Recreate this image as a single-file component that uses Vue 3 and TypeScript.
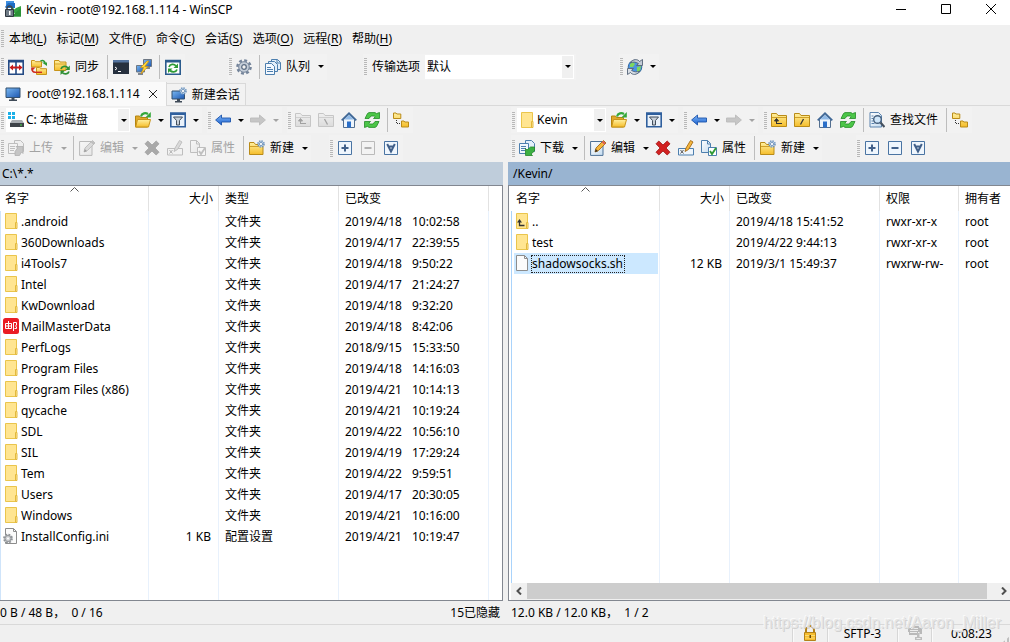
<script setup lang="ts">
import { ref } from 'vue'

interface Item {
  icon?: string
  label?: string
  title?: string
  arrow?: boolean
  disabled?: boolean
  sep?: boolean
  combo?: string
  comboLabel?: string
}
interface Group {
  items: Item[]
  kind?: string
}
interface LocalFile {
  icon: string
  name: string
  size: string
  type: string
  date: string
  time: string
}
interface RemoteFile {
  icon: string
  name: string
  size: string
  date: string
  rights: string
  owner: string
}

const sep: Item = { sep: true }

const menus: [string, string][] = [
  ['本地', 'L'], ['标记', 'M'], ['文件', 'F'], ['命令', 'C'],
  ['会话', 'S'], ['选项', 'O'], ['远程', 'R'], ['帮助', 'H'],
]

const mainBar: Group[] = [
  {
    items: [
      { icon: 'compare', title: '比较目录' },
      { icon: 'syncdirs', title: '同步目录' },
      { icon: 'sync', label: '同步' },
      sep,
      { icon: 'terminal', title: '终端' },
      { icon: 'putty', title: 'PuTTY' },
      sep,
      { icon: 'keepup', title: '刷新' },
    ],
  },
  { kind: 'prefs', items: [{ icon: 'gear', title: '选项' }, sep, { icon: 'queue', label: '队列', arrow: true }] },
  { kind: 'transfer', items: [{ combo: '默认', comboLabel: '传输选项' }] },
  { kind: 'globe', items: [{ icon: 'globe', title: '同步浏览', arrow: true }] },
]

const navItems = (remote: boolean): Group[] => [
  {
    items: [
      remote
        ? { combo: 'Kevin', icon: 'folder', title: '远程目录' }
        : { combo: 'C: 本地磁盘', icon: 'drive', title: '本地驱动器' },
      { icon: 'open', title: '打开目录', arrow: true },
      { icon: 'filter', title: '过滤', arrow: true },
    ],
  },
  {
    items: [
      { icon: 'back', title: '后退', arrow: true },
      { icon: 'forward', title: '前进', arrow: true, disabled: true },
    ],
  },
  {
    items: [
      { icon: 'parent', title: '上级目录', disabled: !remote },
      { icon: remote ? 'root' : 'rootlocal', title: '根目录', disabled: !remote },
      { icon: 'home', title: '主目录' },
      { icon: 'refresh', title: '刷新' },
      ...(remote ? [sep, { icon: 'find', label: '查找文件' }] : []),
      sep,
      { icon: 'tree', title: '目录树' },
    ],
  },
]

const fileItems = (remote: boolean): Group[] => [
  {
    items: [
      { icon: remote ? 'download' : 'upload', label: remote ? '下载' : '上传', arrow: true, disabled: !remote },
      sep,
      { icon: 'edit', label: '编辑', arrow: true, disabled: !remote },
      { icon: 'delete', title: '删除', disabled: !remote },
      { icon: 'rename', title: '重命名', disabled: !remote },
      { icon: 'props', label: '属性', disabled: !remote },
      sep,
      { icon: 'newdir', label: '新建', arrow: true },
    ],
  },
  {
    kind: remote ? 'marks-remote' : 'marks-local',
    items: [
      { icon: 'plus', title: '选择' },
      { icon: 'minus', title: '取消选择', disabled: !remote },
      { icon: 'select', title: '全选' },
    ],
  },
]

const dir = (name: string, date: string, time: string, icon = 'folder'): LocalFile => ({
  icon, name, size: '', type: '文件夹', date, time,
})
const localFiles: LocalFile[] = [
  dir('.android', '2019/4/18', '10:02:58'),
  dir('360Downloads', '2019/4/17', '22:39:55'),
  dir('i4Tools7', '2019/4/18', '9:50:22'),
  dir('Intel', '2019/4/17', '21:24:27'),
  dir('KwDownload', '2019/4/18', '9:32:20'),
  dir('MailMasterData', '2019/4/18', '8:42:06', 'mail'),
  dir('PerfLogs', '2018/9/15', '15:33:50'),
  dir('Program Files', '2019/4/18', '14:16:03'),
  dir('Program Files (x86)', '2019/4/21', '10:14:13'),
  dir('qycache', '2019/4/21', '10:19:24'),
  dir('SDL', '2019/4/22', '10:56:10'),
  dir('SIL', '2019/4/19', '17:29:24'),
  dir('Tem', '2019/4/22', '9:59:51'),
  dir('Users', '2019/4/17', '20:30:05'),
  dir('Windows', '2019/4/21', '10:16:00'),
  { icon: 'ini', name: 'InstallConfig.ini', size: '1 KB', type: '配置设置', date: '2019/4/21', time: '10:19:47' },
]
const remoteFiles: RemoteFile[] = [
  { icon: 'folderup', name: '..', size: '', date: '2019/4/18 15:41:52', rights: 'rwxr-xr-x', owner: 'root' },
  { icon: 'folder', name: 'test', size: '', date: '2019/4/22 9:44:13', rights: 'rwxr-xr-x', owner: 'root' },
  { icon: 'file', name: 'shadowsocks.sh', size: '12 KB', date: '2019/3/1 15:49:37', rights: 'rwxrw-rw-', owner: 'root' },
]
const selected = ref('shadowsocks.sh')

const panes = [
  { key: 'local', rows: [navItems(false), fileItems(false)] },
  { key: 'remote', rows: [navItems(true), fileItems(true)] },
]
</script>

<template>
  <div class="window">
    <svg class="defs" width="0" height="0" aria-hidden="true">
      <defs>
        <linearGradient id="gFold" x1="0" y1="0" x2="0" y2="1"><stop offset="0" stop-color="#fff0a0" /><stop offset="1" stop-color="#f5bd2a" /></linearGradient>
        <linearGradient id="gBlue" x1="0" y1="0" x2="1" y2="1"><stop offset="0" stop-color="#7ab8f2" /><stop offset="1" stop-color="#1b56b0" /></linearGradient>
        <linearGradient id="gArrow" x1="0" y1="0" x2="0" y2="1"><stop offset="0" stop-color="#7db4f5" /><stop offset="1" stop-color="#1c62cf" /></linearGradient>
        <linearGradient id="gPale" x1="0" y1="0" x2="1" y2="1"><stop offset="0" stop-color="#fff" /><stop offset="1" stop-color="#c5dcf0" /></linearGradient>
      </defs>
      <symbol id="i-app" viewBox="0 0 16 16">
        <path d="M1 0h8v6H1z" fill="#3f8fe0" /><path d="M0 6l3-4h7v5H1z" fill="#1e6cc4" />
        <path d="M6.500 5l3 3.500L11 7l5-2v10.500H6.500l3.500-3-3.500-3z" fill="#37a343" /><path d="M10 12l6-5v8.500H8z" fill="#2a9136" />
        <path d="M2 9V7.500a2.500 2.500 0 0 1 5 0V9" fill="none" stroke="#3e4750" stroke-width="1.600" />
        <path d="M.5 8.500h8v7h-8z" fill="#6f7b86" stroke="#2f3740" /><path d="M4 10h1.500v4H4z" fill="#fff" />
      </symbol>
      <symbol id="i-compare" viewBox="0 0 16 16">
        <path d="M.8 1.500h14.400v13.700H.8z" fill="#fff" stroke="#244a84" stroke-width="1.600" />
        <path d="M0 1h16v2.500H0zM7.200 1h1.600v14H7.200z" fill="#244a84" />
        <path d="M1.500 8.500L5 5.500v2h6v-2l3.500 3-3.500 3v-2H5v2z" fill="#c81a1a" />
      </symbol>
      <symbol id="i-syncdirs" viewBox="0 0 16 16">
        <path d="M.5 1.500h3l1 1.200h6v5.300h-10z" fill="url(#gFold)" stroke="#c8941a" />
        <path d="M5.500 8.500h3l1 1.200h6v5.800h-10z" fill="url(#gFold)" stroke="#c8941a" />
        <path d="M9.500 2c2-1 4-.5 4.500 2" fill="none" stroke="#2e9a35" stroke-width="1.600" /><path d="M11 3.500h5v3.500z" fill="#2e9a35" />
        <path d="M1 9.500c0 2 .5 3.500 3 3.800" fill="none" stroke="#cf2b20" stroke-width="1.600" /><path d="M0 8.500h4.500l-3.500 3.500z" fill="#cf2b20" />
        <path d="M4 13.300h7" stroke="#cf2b20" stroke-width="1.400" />
      </symbol>
      <symbol id="i-sync" viewBox="0 0 16 16">
        <path d="M.5 1.500h4.500l1 1.500h6v8.500H.5z" fill="url(#gFold)" stroke="#c8941a" /><path d="M1 5h11" stroke="#d7a52c" />
        <path d="M7 10c1-3 5-3.500 7-1" fill="none" stroke="#2e8f35" stroke-width="1.800" /><path d="M15.800 6.500v4.500h-4.500z" fill="#2e8f35" />
        <path d="M15 12.500c-1 3-5 3-6.800 1" fill="none" stroke="#2e8f35" stroke-width="1.800" /><path d="M6.500 16v-4.500H11z" fill="#2e8f35" />
      </symbol>
      <symbol id="i-terminal" viewBox="0 0 16 16">
        <path d="M0 1h16v14H0z" fill="#26303e" /><path d="M0 1h16v2.500H0z" fill="#54749f" />
        <path d="M2 8l2 1.500-2 1.500M5 12.500h3" fill="none" stroke="#fff" />
      </symbol>
      <symbol id="i-putty" viewBox="0 0 16 16">
        <path d="M7.500.5h8v7h-8z" fill="url(#gBlue)" stroke="#6d7783" /><path d="M.5 6.500h8v6.500h-8z" fill="url(#gBlue)" stroke="#6d7783" />
        <path d="M2 15h5M10 9h4" stroke="#59636f" stroke-width="1.500" />
        <path d="M11 2L4.500 8.500h3L5 15l7-7.500H8.800L13 2z" fill="#ffd83b" stroke="#c98d12" stroke-width=".7" />
      </symbol>
      <symbol id="i-keepup" viewBox="0 0 16 16">
        <path d="M.8 1.500h14.400v13.700H.8z" fill="#fff" stroke="#2b5b8d" stroke-width="1.600" /><path d="M0 1h16v2.500H0z" fill="#2b5b8d" />
        <path d="M4 8c1-3 5-3.500 7-1" fill="none" stroke="#2e9a35" stroke-width="1.800" /><path d="M13 4.500V9H8.500z" fill="#2e9a35" />
        <path d="M12 10.500c-1 3-5 3-7 1" fill="none" stroke="#2e9a35" stroke-width="1.800" /><path d="M3 14V9.500h4.500z" fill="#2e9a35" />
      </symbol>
      <symbol id="i-gear" viewBox="0 0 16 16">
        <circle cx="8" cy="8" r="6.600" fill="none" stroke="#74849a" stroke-width="2.400" stroke-dasharray="2.900 2.280" />
        <circle cx="8" cy="8" r="5.300" fill="#c3ccd7" stroke="#74849a" /><circle cx="8" cy="8" r="2.300" fill="#f2f2f2" stroke="#5e6f84" stroke-width="1.300" />
      </symbol>
      <symbol id="i-queue" viewBox="0 0 16 16">
        <path d="M6.500.5h6l3 3v7h-9z" fill="#e3effa" stroke="#4d7fae" /><path d="M12 .5v3.500h3.500" fill="none" stroke="#4d7fae" />
        <path d="M3.500 2.500h6l3 3v7h-9z" fill="#e3effa" stroke="#4d7fae" />
        <path d="M.5 4.500h6l3 3v8h-9z" fill="#f4f9ff" stroke="#4d7fae" /><path d="M2 8.500h4M2 10.500h6M2 12.500h6" stroke="#4d7fae" />
      </symbol>
      <symbol id="i-globe" viewBox="0 0 16 16">
        <circle cx="8" cy="8" r="6.800" fill="#4a94e0" stroke="#3568a0" /><path d="M3 5l3-2 2 2-2 3H3zM10 8l4-1-1 5-3 1z" fill="#7fd75f" />
        <path d="M3 4C6-.5 11 0 12.500 2.500L15.500.5v6h-6l2-1.800C9.500 3 6 2.500 3 4z" fill="#c3ccd6" stroke="#536377" stroke-width=".9" />
        <path d="M13 12C10 16.500 5 16 3.500 13.500L.5 15.500v-6h6l-2 1.800C6.500 13 10 13.500 13 12z" fill="#d9dfe6" stroke="#536377" stroke-width=".9" />
      </symbol>
      <symbol id="i-monitor" viewBox="0 0 16 16">
        <path d="M1 2h14v9.500H1z" fill="url(#gBlue)" stroke="#33506f" /><path d="M6.500 12h3v1.500h-3zM4 13.500h8V15H4z" fill="#3f4b58" />
      </symbol>
      <symbol id="i-newsession" viewBox="0 0 16 16">
        <path d="M1 4h12.500v8H1z" fill="url(#gBlue)" stroke="#33506f" /><path d="M6 12h3v2H6zM4 14h7v1.500H4z" fill="#3f4b58" />
        <circle cx="12" cy="4" r="3" fill="#d5e5f5" stroke="#6c93bd" stroke-width="1.600" stroke-dasharray="1.400 .96" /><circle cx="12" cy="4" r="1.600" fill="#fff" stroke="#7d9cbd" />
      </symbol>
      <symbol id="i-drive" viewBox="0 0 16 16">
        <path d="M0 0h3v3H0zM4 0h3v3H4zM0 4h3v3H0zM4 4h3v3H4z" fill="#1bb0e8" />
        <path d="M4 8h10l2 3H2z" fill="#a9adb2" /><path d="M2 11h14v4H2z" fill="#3e4349" /><path d="M12 12.500h2v1h-2z" fill="#48e04c" />
      </symbol>
      <symbol id="i-open" viewBox="0 0 16 16">
        <path d="M.5 4h4l1 1.500h7V15H.5z" fill="#e0a82a" stroke="#b3850f" />
        <path d="M2.500 7.500h13L13.500 15H.7z" fill="url(#gFold)" stroke="#c8941a" />
        <path d="M6 4.500C7 1 10.500.5 13 2" fill="none" stroke="#35a83a" stroke-width="2.200" /><path d="M15.800 0v5.500h-5.500z" fill="#35a83a" />
      </symbol>
      <symbol id="i-filter" viewBox="0 0 16 16">
        <path d="M.8 1.300h14.400v13.400H.8z" fill="#eaf2fb" stroke="#2f5f9d" stroke-width="1.600" /><path d="M0 .5h16V3H0z" fill="#2f5f9d" />
        <path d="M3.500 5h9L9.500 8.500V13h-3V8.500z" fill="#c9d0d8" stroke="#414d5b" />
      </symbol>
      <symbol id="i-back" viewBox="0 0 16 16"><path d="M.6 8L6.500 3v3h9v4h-9v3z" fill="url(#gArrow)" stroke="#1d55ab" stroke-width=".9" /></symbol>
      <symbol id="i-forward" viewBox="0 0 16 16"><path d="M15.400 8L9.500 3v3h-9v4h9v3z" fill="#8a8a8a" stroke="#707070" stroke-width=".9" /></symbol>
      <symbol id="i-parent" viewBox="0 0 16 16">
        <path d="M.5 1.500h5l1.500 2h8.500v11H.5z" fill="url(#gFold)" stroke="#b98b18" /><path d="M1 5.500h14" stroke="#cfa02a" />
        <path d="M5.500 12V8M5 11.500h6M3.500 9l2-2.500 2 2.500z" fill="#333" stroke="#333" />
      </symbol>
      <symbol id="i-root" viewBox="0 0 16 16">
        <path d="M.5 1.500h5l1.500 2h8.500v11H.5z" fill="url(#gFold)" stroke="#b98b18" /><path d="M1 5.500h14" stroke="#cfa02a" /><path d="M6.500 12.500l3-5.500" stroke="#333" stroke-width="1.300" />
      </symbol>
      <symbol id="i-rootlocal" viewBox="0 0 16 16">
        <path d="M.5 1.500h5l1.500 2h8.500v11H.5z" fill="url(#gFold)" stroke="#b98b18" /><path d="M1 5.500h14" stroke="#cfa02a" /><path d="M6.500 7l3 5.500" stroke="#333" stroke-width="1.300" />
      </symbol>
      <symbol id="i-home" viewBox="0 0 16 16">
        <path d="M2.500 7.500L8 2.500l5.500 5V15.500h-11z" fill="#eef5fc" stroke="#536f90" /><path d="M.7 8.300L8 1.200l7.300 7.100" fill="none" stroke="#3f6796" stroke-width="1.700" />
        <path d="M3 7.500l5-4.500 5 4.500z" fill="#8fb9e6" /><path d="M6 9.500h4v6H6z" fill="#2a6fc9" />
      </symbol>
      <symbol id="i-refresh" viewBox="0 0 16 16">
        <path d="M1 6.500L3.500 1.500 5 .6h6l1.500 1L15.500.5v6h-6l1.700-1.700-1-.8H7L5 6.500z" fill="#4cc648" stroke="#238a27" stroke-width=".8" />
        <path d="M15 9.500l-2.500 5-1.500.9H5l-1.500-1-3 1.100v-6h6l-1.700 1.700 1 .8H9l2-2.500z" fill="#4cc648" stroke="#238a27" stroke-width=".8" />
      </symbol>
      <symbol id="i-tree" viewBox="0 0 16 16">
        <path d="M.5 1h2.500l.8 1h4v4.500H.5zM8.500 9H11l.8 1h3.700v5h-7z" fill="url(#gFold)" stroke="#b98b18" />
        <path d="M3.500 8v4M4 11.500h4" stroke="#333" stroke-dasharray="1 1" />
      </symbol>
      <symbol id="i-find" viewBox="0 0 16 16">
        <path d="M1 .5h8.500l3 3v11.500H1z" fill="url(#gPale)" stroke="#5b83ae" /><path d="M2.500 4h2M2.500 6.500h2M2.500 9h2M2.500 11.500h3" stroke="#5b83ae" />
        <circle cx="8.500" cy="7.500" r="3.800" fill="#cfe6fa" stroke="#45607e" stroke-width="1.400" /><path d="M11.500 10.500l4 4.500" stroke="#45505e" stroke-width="2.200" />
      </symbol>
      <symbol id="i-download" viewBox="0 0 16 16">
        <path d="M6.500.5h6l3 3v8h-9z" fill="#e3effa" stroke="#4d7fae" /><path d="M.5 3.500h9v10H.5z" fill="#f1f7fd" stroke="#4d7fae" /><path d="M2 6.500h5M2 8.500h5M2 10.500h4" stroke="#4d7fae" />
        <path d="M15.500 7v4l-3.500 3 1.500 1.500H6.500v-7L8 10l3.500-3z" fill="#3cb043" stroke="#23852a" stroke-width=".8" />
      </symbol>
      <symbol id="i-upload" viewBox="0 0 16 16">
        <path d="M6.500.5h6l3 3v8h-9z" fill="#e3effa" stroke="#4d7fae" /><path d="M.5 3.500h9v10H.5z" fill="#f1f7fd" stroke="#4d7fae" /><path d="M2 6.500h5M2 8.500h5M2 10.500h4" stroke="#4d7fae" />
        <path d="M7 15.500v-4L9.500 8 8 6.500h7v7L13.500 12l-2 3.500z" fill="#888" stroke="#555" stroke-width=".8" />
      </symbol>
      <symbol id="i-edit" viewBox="0 0 16 16">
        <path d="M.6 1.500h12.400v13.900H.6z" fill="url(#gPale)" stroke="#4d7096" /><path d="M5 12l1-4 7.500-7.500 2.500 2.500-7.500 7.500z" fill="#f6b63c" stroke="#a36a17" stroke-width=".9" />
        <path d="M12.500 1.500l2.500 2.500" stroke="#d85a5a" stroke-width="1.800" /><path d="M5 12l.8-3 2.200 2.200z" fill="#3a2c1c" />
      </symbol>
      <symbol id="i-delete" viewBox="0 0 16 16"><path d="M1 3.800L3.800 1 8 5l4.200-4L15 3.800 11 8l4 4.200L12.200 15 8 11l-4.200 4L1 12.200 5 8z" fill="#d22222" stroke="#9e1414" stroke-width=".8" /></symbol>
      <symbol id="i-rename" viewBox="0 0 16 16">
        <path d="M.5 8.500h15v6.500H.5z" fill="#eef5fc" stroke="#4d7fae" /><path d="M2.500 10l3 3.500M5.500 10l-3 3.500" stroke="#444" stroke-width=".9" />
        <path d="M7 11.500L8 8l4.500-7.500L15 2 10.500 9.500z" fill="#f6b63c" stroke="#a36a17" stroke-width=".9" />
      </symbol>
      <symbol id="i-props" viewBox="0 0 16 16">
        <path d="M.5.5h6l3 3v9h-9z" fill="url(#gPale)" stroke="#4d7fae" /><path d="M6.500.5v3.500h3" fill="none" stroke="#4d7fae" />
        <path d="M7.500 7.500h8v8h-8z" fill="#fff" stroke="#4d7fae" /><path d="M9 11l2 3 4-6" fill="none" stroke="#2f9a34" stroke-width="1.900" />
      </symbol>
      <symbol id="i-newdir" viewBox="0 0 16 16">
        <path d="M.5 2.500h4.500l1.500 2h7.500v10H.5z" fill="url(#gFold)" stroke="#b98b18" /><path d="M1 6.500h13" stroke="#cfa02a" />
        <circle cx="12" cy="4" r="3" fill="#d5e5f5" stroke="#6c93bd" stroke-width="1.600" stroke-dasharray="1.400 .96" /><circle cx="12" cy="4" r="1.600" fill="#fff" stroke="#7d9cbd" />
      </symbol>
      <symbol id="i-plus" viewBox="0 0 16 16"><path d="M1.500 1.500h13v13h-13z" fill="#eff6fd" stroke="#4a74a3" /><path d="M8 4.500v7M4.500 8h7" stroke="#41608a" stroke-width="2" /></symbol>
      <symbol id="i-minus" viewBox="0 0 16 16"><path d="M1.500 1.500h13v13h-13z" fill="#eff6fd" stroke="#4a74a3" /><path d="M4.500 8h7" stroke="#41608a" stroke-width="2" /></symbol>
      <symbol id="i-select" viewBox="0 0 16 16"><path d="M1.500 1.500h13v13h-13z" fill="#eff6fd" stroke="#4a74a3" /><path d="M4.200 4L8 11.500 11.800 4M5.500 6.500h5" fill="none" stroke="#41608a" stroke-width="2" /></symbol>
      <symbol id="i-folder" viewBox="0 0 16 16">
        <path d="M2.500.5h11v15h-11z" fill="#ffe591" stroke="#eac54c" /><path d="M12.500 15.500V9.500h1.500v6z" fill="#ffe9a0" stroke="#e3b93d" />
      </symbol>
      <symbol id="i-folderup" viewBox="0 0 16 16">
        <path d="M2.500.5h11v15h-11z" fill="#ffe591" stroke="#eac54c" /><path d="M12.500 15.500V9.500h1.500v6z" fill="#ffe9a0" stroke="#e3b93d" />
        <path d="M5.500 8v4.500h5" fill="none" stroke="#333" stroke-width="1.300" /><path d="M3 9.500L5.500 6 8 9.500z" fill="#333" />
      </symbol>
      <symbol id="i-file" viewBox="0 0 16 16"><path d="M2.500.5h8l3 3v12h-11z" fill="#fbfbfb" stroke="#8c8c8c" /><path d="M10.500.5v3h3" fill="none" stroke="#8c8c8c" /></symbol>
      <symbol id="i-ini" viewBox="0 0 16 16">
        <path d="M2.500.5h8l3 3v12h-11z" fill="#fbfbfb" stroke="#8c8c8c" /><path d="M10.500.5v3h3" fill="none" stroke="#8c8c8c" />
        <circle cx="5" cy="10.500" r="4" fill="#d9dadb" stroke="#8f9397" stroke-width="1.800" stroke-dasharray="1.800 1.340" /><circle cx="5" cy="10.500" r="3" fill="#cfd1d3" stroke="#8f9397" /><circle cx="5" cy="10.500" r="1" fill="#fff" />
      </symbol>
      <symbol id="i-mail" viewBox="0 0 16 16">
        <rect width="16" height="16" rx="2.500" fill="#ea1c24" />
        <path d="M2.500 5.500h6v5h-6zM5.500 3v7.500M2.500 8h6M10.500 13V4.500h3v2.500l-1 1 1 1v1.500h-2" fill="none" stroke="#fff" />
      </symbol>
      <symbol id="i-lock" viewBox="0 0 16 16">
        <path d="M4 8V5a4 4 0 0 1 8 0v3" fill="none" stroke="#b3821a" stroke-width="2" /><path d="M2.500 7.500h11v8h-11z" fill="#f7bd2e" stroke="#b3821a" />
        <path d="M3 10.500h10M3 13h10" stroke="#fbdc74" /><path d="M7.500 10h1.500v3H7.500z" fill="#6b4a08" />
      </symbol>
      <symbol id="i-zip" viewBox="0 0 16 16">
        <path d="M4 1h8.500v2H15v6h-2.500V7H11v3H2V7H1V3h3z" fill="#b9b9b9" /><path d="M4 3.500h7M3 5.500h8M3 7.500h7" stroke="#ececec" />
        <path d="M10 8h2.500v4H15v3H8v-3h2z" fill="#bdbdbd" /><path d="M9.500 13.500h4" stroke="#ececec" />
      </symbol>
    </svg>

    <header class="titlebar">
      <svg class="ico"><use href="#i-app" /></svg>
      <span class="title">Kevin - root@192.168.1.114 - WinSCP</span>
      <div class="winbtns">
        <button type="button" aria-label="最小化"><svg viewBox="0 0 10 10"><path d="M0 5.500h10" /></svg></button>
        <button type="button" aria-label="最大化"><svg viewBox="0 0 10 10"><path d="M.5.5h9v9h-9z" /></svg></button>
        <button type="button" aria-label="关闭"><svg viewBox="0 0 10 10"><path d="M0 0l10 10M10 0L0 10" /></svg></button>
      </div>
    </header>

    <nav class="menubar">
      <span class="grip"></span>
      <button v-for="m in menus" :key="m[1]" type="button">{{ m[0] }}(<u>{{ m[1] }}</u>)</button>
    </nav>

    <div class="bar bar-main">
      <div v-for="(g, gi) in mainBar" :key="gi" class="group" :class="g.kind">
        <span class="grip"></span>
        <template v-for="(it, ii) in g.items" :key="ii">
          <span v-if="it.sep" class="sep"></span>
          <template v-else-if="it.combo">
            <label class="combo-label" for="transfer">{{ it.comboLabel }}</label>
            <span class="combo">
              <select id="transfer"><option>{{ it.combo }}</option></select>
              <span class="drop"><i class="caret"></i></span>
            </span>
          </template>
          <button v-else type="button" class="tool" :class="{ labelled: it.label }" :aria-label="it.label || it.title">
            <svg class="ico"><use :href="'#i-' + it.icon" /></svg><span v-if="it.label">{{ it.label }}</span><span v-if="it.arrow" class="dd"><i class="caret"></i></span>
          </button>
        </template>
      </div>
    </div>

    <div class="tabs">
      <div class="tab active">
        <button type="button" class="tab-name"><svg class="ico"><use href="#i-monitor" /></svg><span>root@192.168.1.114</span></button>
        <button type="button" class="tab-close" aria-label="关闭会话"><svg viewBox="0 0 10 10"><path d="M1 1l8 8M9 1L1 9" /></svg></button>
      </div>
      <button type="button" class="tab new"><svg class="ico"><use href="#i-newsession" /></svg><span>新建会话</span></button>
      <span class="tabs-rest"></span>
    </div>

    <main class="panes">
      <section v-for="p in panes" :key="p.key" class="pane" :class="p.key">
        <div v-for="(row, ri) in p.rows" :key="ri" class="bar">
          <div v-for="(g, gi) in row" :key="gi" class="group" :class="g.kind">
            <span class="grip"></span>
            <template v-for="(it, ii) in g.items" :key="ii">
              <span v-if="it.sep" class="sep"></span>
              <span v-else-if="it.combo" class="combo">
                <svg class="ico"><use :href="'#i-' + it.icon" /></svg>
                <select :aria-label="it.title"><option>{{ it.combo }}</option></select>
                <span class="drop"><i class="caret"></i></span>
              </span>
              <button v-else type="button" class="tool" :class="{ labelled: it.label }" :disabled="it.disabled" :aria-label="it.label || it.title">
                <svg class="ico"><use :href="'#i-' + it.icon" /></svg><span v-if="it.label">{{ it.label }}</span><span v-if="it.arrow" class="dd"><i class="caret"></i></span>
              </button>
            </template>
          </div>
        </div>

        <div class="path">{{ p.key === 'local' ? 'C:\\*.*' : '/Kevin/' }}</div>

        <div class="list">
          <div class="scroll">
            <table v-if="p.key === 'local'">
              <colgroup><col class="c-name" /><col class="c-size" /><col class="c-type" /><col class="c-date" /><col /></colgroup>
              <thead>
                <tr><th class="name">名字<svg class="sort" viewBox="0 0 9 5"><path d="M.5 4.500l4-4 4 4" /></svg></th><th class="num">大小</th><th>类型</th><th>已改变</th><th></th></tr>
              </thead>
              <tbody>
                <tr v-for="f in localFiles" :key="f.name">
                  <td class="name"><div class="entry"><svg class="ico"><use :href="'#i-' + f.icon" /></svg><span>{{ f.name }}</span></div></td>
                  <td class="num">{{ f.size }}</td>
                  <td>{{ f.type }}</td>
                  <td><span class="day">{{ f.date }}</span><span>{{ f.time }}</span></td>
                  <td></td>
                </tr>
                <tr class="fill"><td class="name"></td><td></td><td></td><td></td><td></td></tr>
              </tbody>
            </table>
            <table v-else>
              <colgroup><col class="c-name" /><col class="c-size" /><col class="c-date" /><col class="c-rights" /><col /></colgroup>
              <thead>
                <tr><th class="name">名字<svg class="sort" viewBox="0 0 9 5"><path d="M.5 4.500l4-4 4 4" /></svg></th><th class="num">大小</th><th>已改变</th><th>权限</th><th>拥有者</th></tr>
              </thead>
              <tbody>
                <tr v-for="f in remoteFiles" :key="f.name" @click="selected = f.name">
                  <td class="name"><div class="entry" :class="{ selected: selected === f.name }"><svg class="ico"><use :href="'#i-' + f.icon" /></svg><span>{{ f.name }}</span></div></td>
                  <td class="num">{{ f.size }}</td>
                  <td>{{ f.date }}</td>
                  <td>{{ f.rights }}</td>
                  <td>{{ f.owner }}</td>
                </tr>
                <tr class="fill"><td class="name"></td><td></td><td></td><td></td><td></td></tr>
              </tbody>
            </table>
          </div>
          <div v-if="p.key === 'remote'" class="hscroll">
            <button type="button" aria-label="向左滚动"><svg viewBox="0 0 6 8"><path d="M5 .5L1.500 4 5 7.500" /></svg></button>
            <span class="thumb"></span>
            <button type="button" aria-label="向右滚动"><svg viewBox="0 0 6 8"><path d="M1 .5L4.500 4 1 7.500" /></svg></button>
          </div>
        </div>

        <div class="count">
          <template v-if="p.key === 'local'"><span>0 B / 48 B，&nbsp; 0 / 16</span><span>15已隐藏</span></template>
          <span v-else>12.0 KB / 12.0 KB，&nbsp; 1 / 2</span>
        </div>
      </section>
    </main>

    <footer class="status">
      <span class="cell lock"><svg class="ico"><use href="#i-lock" /></svg></span>
      <span class="cell proto">SFTP-3</span>
      <span class="cell zip"><svg class="ico"><use href="#i-zip" /></svg></span>
      <span class="cell clock">0:08:23</span>
      <span class="sizer"></span>
    </footer>
    <span class="watermark">https://blog.csdn.net/Aaron_Miller</span>
  </div>
</template>

<style>
html, body { margin: 0; background: #f0f0f0; }
</style>

<style scoped>
.window {
  position: relative;
  display: flex;
  flex-direction: column;
  height: 100vh;
  overflow: hidden;
  background: #f0f0f0;
  color: #000;
  font: 12px/16px "Noto Sans", "Noto Sans CJK SC", sans-serif;
  white-space: nowrap;
}
.window *, .window { box-sizing: border-box; }
.defs { position: absolute; }
button, select {
  margin: 0;
  padding: 0;
  border: 0;
  background: none;
  color: inherit;
  font: inherit;
  white-space: nowrap;
}
.ico { flex: none; display: block; width: 16px; height: 16px; }

.titlebar { flex: none; display: flex; align-items: flex-start; height: 25px; padding: 1px 4px 0 5px; background: #fff; }
.title { padding-left: 5px; line-height: 18px; }
.winbtns { display: flex; gap: 15px; margin-left: auto; }
.winbtns button { display: flex; justify-content: center; align-items: center; width: 30px; height: 16px; }
.winbtns svg { width: 10px; height: 10px; fill: none; stroke: #000; }

.grip {
  flex: none;
  width: 3px;
  height: 17px;
  margin: 0 1px;
  background: repeating-linear-gradient(#b8b8b8 0 1px, transparent 1px 2px);
}
.menubar { flex: none; display: flex; align-items: center; gap: 10px; height: 27px; }
.menubar .grip { margin-right: -5px; }
.menubar u { text-underline-offset: 2px; }

.bar { flex: none; display: flex; align-items: center; gap: 5px; height: 28px; }
.bar-main { height: 30px; padding-bottom: 1px; gap: 0; }
.group { flex: none; display: flex; align-items: center; height: 26px; background: #f2f2f2; }
.prefs { margin-left: 43px; }
.transfer { margin-left: 36px; }
.globe { margin-left: 43px; }
.marks-local { margin-left: 13px; }
.marks-remote { margin-left: 29px; }
.tool { display: flex; align-items: center; height: 24px; padding-left: 3px; }
.tool .ico { margin-right: 4px; }
.labelled .ico { margin-right: 5px; }
.labelled > span:not(.dd) { padding-right: 5px; }
.tool:disabled { color: #a3a3a3; }
.tool:disabled .ico { filter: grayscale(1); opacity: .42; }
.dd { display: flex; width: 12px; padding-left: 3px; }
.caret { width: 0; height: 0; border: 3px solid transparent; border-top-color: currentColor; border-bottom: 0; }
.sep { width: 6px; height: 24px; background: linear-gradient(#bdbdbd, #bdbdbd) 3px 0 / 1px 100% no-repeat; }
.combo { display: flex; align-items: center; width: 124px; height: 24px; margin: 0 2px 0 1px; padding-left: 2px; background: #fff; }
.combo select { flex: 1; min-width: 0; height: 22px; padding-left: 2px; appearance: none; }
.drop { display: flex; justify-content: center; align-items: center; width: 11px; height: 22px; margin-right: 1px; background: #f0f0f0; pointer-events: none; }
.combo-label { padding: 0 4px; }
.transfer .combo { width: 149px; padding-left: 0; }
.remote .combo { width: 89px; }

.tabs { flex: none; display: flex; height: 24px; }
.tab { display: flex; align-items: center; }
.tab.active { gap: 8px; padding: 0 8px 0 5px; background: #fafafa; border-right: 1px solid #d9d9d9; }
.tab-name { display: flex; align-items: center; gap: 6px; }
.tab-close { display: flex; }
.tab-close svg { width: 10px; height: 10px; fill: none; stroke: #222; }
.tab.new { gap: 5px; margin-top: 1px; padding: 0 5px 0 4px; border: solid #d9d9d9; border-width: 1px 1px 1px 0; background: #f2f2f2; }
.tabs-rest { flex: 1; border-bottom: 1px solid #d9d9d9; }

.panes { flex: 1; min-height: 0; display: grid; grid-template-columns: minmax(0, 503fr) minmax(0, 502fr); column-gap: 5px; }
.pane { display: flex; flex-direction: column; min-width: 0; min-height: 0; }
.remote .bar { padding-left: 3px; }
.path { flex: none; height: 23px; padding: 4px 2px 0; background: #bfcddb; }
.remote .path { padding-left: 5px; background: #99b4d1; }
.list { flex: 1; min-height: 0; display: flex; flex-direction: column; background: #fff; border: solid #828790; border-width: 1px 1px 1px 0; }
.remote .list { border-width: 1px 0 1px 1px; padding-left: 2px; }
.scroll { flex: 1; min-height: 0; overflow: hidden; }
table { width: 100%; height: 100%; table-layout: fixed; border-spacing: 0; }
.c-name { width: 149px; }
.c-size { width: 70px; }
.c-type { width: 120px; }
.c-date { width: 150px; }
.c-rights { width: 79px; }
th, td { padding: 0 0 0 6px; text-align: left; font-weight: 400; border-right: 1px solid #e8f1fc; overflow: hidden; }
th { position: relative; height: 25px; border-color: #e2e2e2; }
td { height: 21px; }
th:last-child, td:last-child { border-right: 0; }
th.name { padding-left: 5px; }
td.name { padding: 0; border-left: 1px solid #cfe4fa; }
.remote td.name { border-left-color: #a9d3fb; }
.num { padding: 0 7px 0 0; text-align: right; }
th.num { padding-right: 5px; }
.fill td { height: auto; }
.sort { position: absolute; top: 1px; left: calc(50% - 4px); width: 9px; height: 5px; fill: none; stroke: #555; }
.entry { display: flex; align-items: flex-start; gap: 1px; height: 21px; margin: 0 1px 0 2px; padding-top: 2px; }
.entry span { padding: 0 2px 0 1px; line-height: 18px; }
.selected { background: #cce8ff; }
.selected span { outline: 1px dotted #222; outline-offset: -1px; }
.day { display: inline-block; width: 67px; }
.hscroll { flex: none; display: flex; height: 17px; padding: 0 0 1px; background: #f0f0f0; }
.hscroll button { display: flex; justify-content: center; align-items: center; width: 16px; }
.hscroll button:last-child { width: 23px; padding-left: 10px; }
.hscroll svg { width: 6px; height: 8px; fill: none; stroke: #505050; stroke-width: 2; }
.thumb { flex: 1; background: #cdcdcd; }
.count { flex: none; display: flex; justify-content: space-between; height: 23px; padding: 4px 3px 0 0; }
.remote .count { padding-left: 3px; }

.status { flex: none; display: flex; justify-content: flex-end; height: 18px; border-top: 1px solid #d9d9d9; overflow: hidden; }
.cell { display: flex; justify-content: center; height: 17px; border-left: 1px solid #d7d7d7; box-shadow: inset 1px 0 #fafafa; }
.cell.proto, .cell.clock { padding-top: 1px; }
.lock { width: 35px; }
.proto { width: 70px; }
.zip { width: 34px; }
.clock { width: 72px; padding-left: 8px; }
.sizer { align-self: flex-end; width: 7px; height: 6px; background: repeating-linear-gradient(90deg, #bfbfbf 0 2px, transparent 2px 4px); clip-path: polygon(100% 0, 100% 100%, 0 100%); }
.watermark {
  position: absolute;
  right: 9px;
  bottom: 9px;
  color: #e6e6e6;
  font: 16px/20px "Liberation Sans", sans-serif;
  text-shadow: 1px 1px #d2d2d2, -1px -1px #fafafa;
  pointer-events: none;
}
</style>
